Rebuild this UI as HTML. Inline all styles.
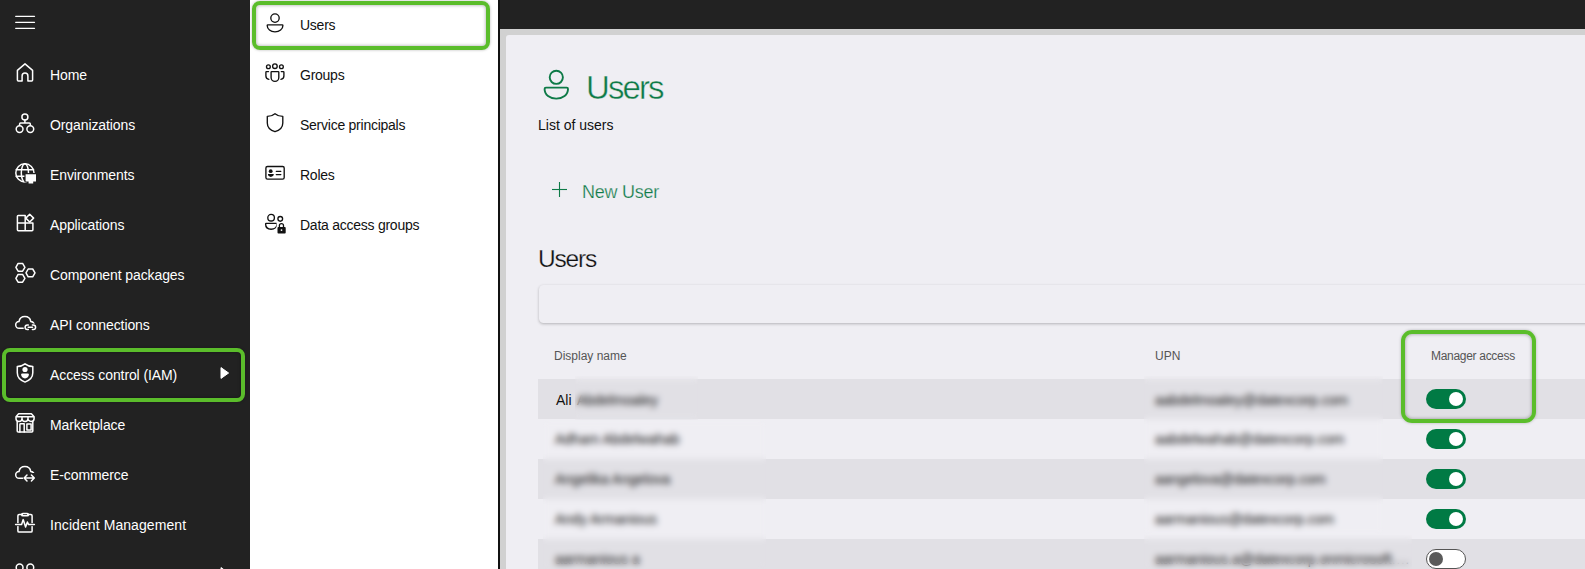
<!DOCTYPE html>
<html><head><meta charset="utf-8">
<style>
*{box-sizing:border-box;margin:0;padding:0}
html,body{width:1585px;height:569px;overflow:hidden;background:#222}
body{position:relative;font-family:"Liberation Sans",sans-serif}
.abs{position:absolute}
#sb{left:0;top:0;width:250px;height:569px;background:#222222}
.si{position:absolute;left:0;width:250px;height:50px}
.si svg{position:absolute;left:13px;top:11px;width:24px;height:24px}
.si span{position:absolute;left:50px;top:17px;font-size:14px;color:#fff;white-space:nowrap;line-height:16px;letter-spacing:-0.1px}
#pn{left:250px;top:0;width:248px;height:569px;background:#fff}
#pnb{left:498px;top:0;width:2px;height:569px;background:#111}
.pi{position:absolute;left:0;width:248px;height:50px}
.pi svg{position:absolute;left:13px;top:11px;width:24px;height:24px}
.pi span{position:absolute;left:50px;top:17px;font-size:14px;color:#111;white-space:nowrap;line-height:16px;letter-spacing:-0.25px}
#tb{left:500px;top:0;width:1085px;height:29px;background:#222222}
#fr{left:500px;top:29px;width:1085px;height:540px;background:#d1d1d1}
#ct{left:506px;top:35px;width:1079px;height:534px;background:#efeef3;border-top-left-radius:3px}
.hl{position:absolute;border:4px solid #5bbd2b;border-radius:8px;box-shadow:inset 0 0 3px 1px rgba(0,0,0,0.22),0 0 3px rgba(0,0,0,0.25)}
.row{position:absolute;left:538px;width:1047px;height:40px}
.dk{background:#e1e0e5}
.tx{color:#111;font-size:14px;line-height:16px;white-space:nowrap;position:absolute}
.bl{position:absolute;backdrop-filter:blur(3.2px);-webkit-backdrop-filter:blur(3.2px)}
.tg{position:absolute;left:1426px;width:40px;height:20px;border-radius:10px;background:#007a44}
.tg::after{content:"";position:absolute;left:23px;top:3px;width:14px;height:14px;border-radius:50%;background:#fff}
.tg.off{background:#fff;border:1px solid #555}
.tg.off::after{left:2px;top:2px;background:#5a5a5a}
</style></head><body>
<div id="sb" class="abs">
  <svg class="abs" style="left:15px;top:15px" width="21" height="15" viewBox="0 0 21 15"><g stroke="#fff" stroke-width="1.3" stroke-linecap="round"><line x1="0.7" y1="1.3" x2="19.5" y2="1.3"/><line x1="0.7" y1="7.3" x2="19.5" y2="7.3"/><line x1="0.7" y1="13.3" x2="19.5" y2="13.3"/></g></svg>
    <div class="si" style="top:50px"><svg viewBox="0 0 24 24"><path fill="none" stroke="#fff" stroke-width="1.5" stroke-linecap="round" stroke-linejoin="round" d="M12 2.9 L19.6 9.4 V18.9 a1 1 0 0 1 -1 1 H14.9 V15 a2.9 2.9 0 0 0 -5.8 0 V19.9 H5.4 a1 1 0 0 1 -1 -1 V9.4 Z"/></svg><span>Home</span></div>
  <div class="si" style="top:100px"><svg viewBox="0 0 24 24"><g fill="none" stroke="#fff" stroke-width="1.5" stroke-linecap="round" stroke-linejoin="round"><circle cx="11.9" cy="6" r="3"/><path d="M11.9 9 V11.9 M6.6 14.6 V12.9 a1 1 0 0 1 1 -1 H16.3 a1 1 0 0 1 1 1 V14.6"/><circle cx="6.6" cy="18.1" r="3.4"/><circle cx="17.3" cy="18.1" r="3.4"/></g></svg><span>Organizations</span></div>
  <div class="si" style="top:150px"><svg viewBox="0 0 24 24"><g fill="none" stroke="#fff" stroke-width="1.5" stroke-linecap="round" stroke-linejoin="round"><circle cx="11.9" cy="11.9" r="9.1"/><ellipse cx="11.9" cy="11.9" rx="3.6" ry="9.1"/><path d="M3.2 8.8 H20.6 M3.2 15.3 H20.6"/></g><path d="M11.4 12 h12.6 v9.6 h-3 v2.4 h-7 v-2.4 h-2.6z" fill="#222"/><path d="M12.6 13.2 h10.4 v7.2 h-2.8 v2.2 h-4.6 v-2.2 h-3z" fill="#fff"/></svg><span>Environments</span></div>
  <div class="si" style="top:200px"><svg viewBox="0 0 24 24"><g fill="none" stroke="#fff" stroke-width="1.5" stroke-linecap="round" stroke-linejoin="round"><path d="M12.2 4.4 H5.3 a0.9 0.9 0 0 0 -0.9 0.9 V18.8 a0.9 0.9 0 0 0 0.9 0.9 H19 a0.9 0.9 0 0 0 0.9 -0.9 V11.9 H12.2 Z M4.4 11.9 H12.2 V19.7"/><path d="M16.7 3.2 L20.6 7.1 L16.7 11 L12.8 7.1 Z"/></g></svg><span>Applications</span></div>
  <div class="si" style="top:250px"><svg viewBox="0 0 24 24"><g fill="none" stroke="#fff" stroke-width="1.5" stroke-linecap="round" stroke-linejoin="round"><path d="M2.9 6.3 L5.1 2.4 H9.6 L11.9 6.3 L9.6 10.2 H5.1 Z"/><path d="M2.9 17.3 L5.1 13.4 H9.6 L11.9 17.3 L9.6 21.2 H5.1 Z"/><path d="M13 11.9 L15.2 8 H19.7 L22 11.9 L19.7 15.8 H15.2 Z"/></g></svg><span>Component packages</span></div>
  <div class="si" style="top:300px"><svg viewBox="0 0 24 24"><path fill="none" stroke="#fff" stroke-width="1.5" stroke-linecap="round" stroke-linejoin="round" d="M11 17.3 H6.2 a3.4 3.4 0 0 1 -0.2 -6.8 a6 6 0 0 1 11.8 0 a3.6 3.6 0 0 1 3.3 2.9"/><path d="M10.5 16.2 a3.6 3.6 0 0 1 3.6 -3.6 h6 a3.6 3.6 0 0 1 0 7.2 h-6 a3.6 3.6 0 0 1 -3.6 -3.6z" fill="#222"/><g fill="none" stroke="#fff" stroke-width="1.5" stroke-linecap="round" stroke-linejoin="round"><path d="M15.3 13.9 H14.4 a2.3 2.3 0 0 0 0 4.6 H15.3 M19.4 13.9 H20.3 a2.3 2.3 0 0 1 0 4.6 H19.4 M15.2 16.2 H19.5"/></g></svg><span>API connections</span></div>
  <div class="si" style="top:350px"><svg viewBox="0 0 24 24"><path fill="none" stroke="#fff" stroke-width="1.5" stroke-linecap="round" stroke-linejoin="round" d="M12 2.8 C9.8 4.6 7.2 5.4 4.3 5.4 V11.8 C4.3 16.2 7 19.3 12 21.1 C17 19.3 19.8 16.2 19.8 11.8 V5.4 C16.8 5.4 14.2 4.6 12 2.8Z"/><circle cx="12" cy="8.5" r="2.6" fill="#fff"/><path d="M8.1 13.6 a1.2 1.2 0 0 1 1.2 -1.2 h5.4 a1.2 1.2 0 0 1 1.2 1.2 c0 2.2 -1.8 3.9 -3.9 3.9 s-3.9 -1.7 -3.9 -3.9z" fill="#fff"/></svg><span>Access control (IAM)</span></div>
  <div class="si" style="top:400px"><svg viewBox="0 0 24 24"><g fill="none" stroke="#fff" stroke-width="1.5" stroke-linecap="round" stroke-linejoin="round"><path d="M5.6 2.8 H18.4 L21.1 5.8 V7.4 a3 3 0 0 1 -6.1 0 a3 3 0 0 1 -6 0 a3 3 0 0 1 -6 0 V5.8 Z M3 5.8 H21 M9 5.8 V7.4 M15 5.8 V7.4"/><path d="M4.2 10.3 V20.1 a1 1 0 0 0 1 1 H18.8 a1 1 0 0 0 1 -1 V10.3"/><path d="M6.9 20.9 V13.4 a0.6 0.6 0 0 1 0.6 -0.6 H11.2 V20.9 M13.9 13 H18.1 V18.9 H13.9 Z"/></g></svg><span>Marketplace</span></div>
  <div class="si" style="top:450px"><svg viewBox="0 0 24 24"><path fill="none" stroke="#fff" stroke-width="1.5" stroke-linecap="round" stroke-linejoin="round" d="M9.6 17.3 H6.2 a3.4 3.4 0 0 1 -0.2 -6.8 a6 6 0 0 1 11.8 0 a3.6 3.6 0 0 1 3.3 3.3"/><path d="M9.4 12 H24 V22 H9.4z" fill="#222" transform="translate(0.8 0)"/><g fill="none" stroke="#fff" stroke-width="1.5" stroke-linecap="round" stroke-linejoin="round"><path d="M11.2 17 H21.2 M14 14 L11.1 17 L14 20 M18.4 14 L21.3 17 L18.4 20"/></g></svg><span>E-commerce</span></div>
  <div class="si" style="top:500px"><svg viewBox="0 0 24 24"><g fill="none" stroke="#fff" stroke-width="1.5" stroke-linecap="round" stroke-linejoin="round"><path d="M9.3 3.6 H6.1 a1.2 1.2 0 0 0 -1.2 1.2 V19.9 a1.2 1.2 0 0 0 1.2 1.2 H17.9 a1.2 1.2 0 0 0 1.2 -1.2 V4.8 a1.2 1.2 0 0 0 -1.2 -1.2 H14.8"/><path d="M9.8 2.6 H14.3 a0.9 0.9 0 0 1 0 2.2 H9.8 a0.9 0.9 0 0 1 0 -2.2z"/></g><path d="M2.5 13.6 H21.5" stroke="#222" stroke-width="3"/><path fill="none" stroke="#fff" stroke-width="1.5" stroke-linecap="round" stroke-linejoin="round" d="M2.6 13.6 H8.6 L10.2 8.6 L12.6 16 L14.4 11 L15.6 13.6 H21.4"/></svg><span style="letter-spacing:0.08px">Incident Management</span></div>
  <svg class="abs" style="left:219px;top:366px" width="11" height="14" viewBox="0 0 11 14"><path d="M2 1.6 L9.6 7 L2 12.4 Z" fill="#fff" stroke="#fff" stroke-width="1" stroke-linejoin="round"/></svg>
  <div class="si" style="top:550px"><svg viewBox="0 0 24 24"><g fill="none" stroke="#fff" stroke-width="1.5" stroke-linecap="round" stroke-linejoin="round"><circle cx="6.6" cy="6.5" r="3.4"/><circle cx="17.3" cy="6.5" r="3.4"/></g></svg></div>
  <svg class="abs" style="left:219px;top:566px" width="11" height="14" viewBox="0 0 11 14"><path d="M2 1.6 L9.6 7 L2 12.4 Z" fill="#fff" stroke="#fff" stroke-width="1" stroke-linejoin="round"/></svg>
  <div class="hl" style="left:2px;top:348px;width:243px;height:54px"></div>
</div>
<div id="pn" class="abs">
  <div class="abs" style="left:6px;top:5px;width:230px;height:41px;background:#fff;box-shadow:0 0 4px 1px rgba(0,0,0,0.28);border-radius:3px"></div>
  <div class="pi" style="top:0px"><svg viewBox="0 0 24 24"><g fill="none" stroke="#111" stroke-width="1.35" stroke-linecap="round" stroke-linejoin="round"><circle cx="12" cy="7.1" r="4.2"/><path d="M4.8 13.9 H19.3 a0.6 0.6 0 0 1 0.6 0.6 C19.9 18.2 16.4 20.9 12 20.9 C7.6 20.9 4.2 18.2 4.2 14.5 a0.6 0.6 0 0 1 0.6 -0.6Z"/></g></svg><span>Users</span></div>
  <div class="pi" style="top:50px"><svg viewBox="0 0 24 24"><g fill="none" stroke="#111" stroke-width="1.35" stroke-linecap="round" stroke-linejoin="round"><circle cx="5.4" cy="5.7" r="1.9"/><circle cx="11.9" cy="5.2" r="2.3"/><circle cx="18.4" cy="5.7" r="1.9"/><path d="M8.9 10.6 H15.2 a0.6 0.6 0 0 1 0.6 0.6 V16.5 a3.85 3.85 0 0 1 -7.7 0 V11.2 a0.6 0.6 0 0 1 0.6 -0.6Z"/><path d="M5.5 10.6 H3.5 a0.6 0.6 0 0 0 -0.6 0.6 V15 a3.3 3.3 0 0 0 3 3.3"/><path d="M18.3 10.6 H20.3 a0.6 0.6 0 0 1 0.6 0.6 V15 a3.3 3.3 0 0 1 -3 3.3"/></g></svg><span>Groups</span></div>
  <div class="pi" style="top:100px"><svg viewBox="0 0 24 24"><path fill="none" stroke="#111" stroke-width="1.35" stroke-linecap="round" stroke-linejoin="round" d="M12 2.7 C9.8 4.5 7.2 5.4 4.3 5.4 V12 C4.3 16.3 7 19.2 12 20.7 C17 19.2 19.8 16.3 19.8 12 V5.4 C16.8 5.4 14.2 4.5 12 2.7Z"/></svg><span>Service principals</span></div>
  <div class="pi" style="top:150px"><svg viewBox="0 0 24 24"><rect x="2.9" y="5.5" width="18.3" height="12.6" rx="1.6" fill="none" stroke="#111" stroke-width="1.35" stroke-linecap="round" stroke-linejoin="round"/><circle cx="7.7" cy="10.2" r="1.9" fill="#111"/><path d="M4.9 13.1 h5.9 c0 1.7 -1.3 2.8 -2.95 2.8 s-2.95 -1.1 -2.95 -2.8z" fill="#111"/><path d="M13.3 10.3 H17.8 M13.3 13.6 H17.8" stroke="#111" stroke-width="1.35" stroke-linecap="round"/></svg><span>Roles</span></div>
  <div class="pi" style="top:200px"><svg viewBox="0 0 24 24"><g fill="none" stroke="#111" stroke-width="1.35" stroke-linecap="round" stroke-linejoin="round"><circle cx="8.1" cy="6.7" r="3.3"/><circle cx="17.25" cy="7.85" r="2.35"/><path d="M3.2 12.4 H13.4 a0.6 0.6 0 0 1 0.6 0.6 C14 16.1 11.4 18.2 8.1 18.2 C4.8 18.2 2.6 16.1 2.6 13 a0.6 0.6 0 0 1 0.6 -0.6Z"/></g><path d="M13.6 11 h10 v12 h-10z" fill="#fff"/><path d="M16.4 16.3 V14.6 a2.05 2.05 0 0 1 4.1 0 V16.3" fill="none" stroke="#111" stroke-width="1.3"/><rect x="14.5" y="16" width="8.2" height="6.4" rx="0.9" fill="#111"/><circle cx="18.5" cy="19.1" r="0.9" fill="#fff"/></svg><span>Data access groups</span></div>
</div>
<div class="hl" style="left:252px;top:1px;width:238px;height:49px"></div>
<div id="pnb" class="abs"></div>
<div id="tb" class="abs"></div>
<div id="fr" class="abs"></div>
<div id="ct" class="abs"></div>
<svg class="abs" style="left:541px;top:69px" width="30" height="32" viewBox="0 0 30 32"><g fill="none" stroke="#0e7a47" stroke-width="1.9" stroke-linejoin="round"><circle cx="15.3" cy="8.3" r="6.6"/><path d="M4.9 18.6 H25.7 a1.3 1.3 0 0 1 1.3 1.3 C27 25.9 21.8 29.6 15.3 29.6 C8.8 29.6 3.6 25.9 3.6 19.9 a1.3 1.3 0 0 1 1.3 -1.3Z"/></g></svg>
<div class="abs" style="left:586px;top:69px;font-size:33px;line-height:38px;color:#0e7a47;letter-spacing:-1.9px;-webkit-text-stroke:0.45px #efeef3">Users</div>
<div class="abs" style="left:538px;top:117px;font-size:14px;line-height:16px;color:#111">List of users</div>
<svg class="abs" style="left:551px;top:181px" width="17" height="17" viewBox="0 0 17 17"><g stroke="#0e7a47" stroke-width="1.1"><line x1="8.5" y1="1" x2="8.5" y2="16"/><line x1="1" y1="8.5" x2="16" y2="8.5"/></g></svg>
<div class="abs" style="left:582px;top:182px;font-size:18px;line-height:20px;color:#0e7a47;letter-spacing:-0.25px;-webkit-text-stroke:0.25px #efeef3">New User</div>
<div class="abs" style="left:538px;top:246px;font-size:24.5px;line-height:26px;color:#111;letter-spacing:-1.2px;-webkit-text-stroke:0.25px #efeef3">Users</div>
<div class="abs" style="left:539px;top:285px;width:1060px;height:38px;border-radius:4.5px;background:#efeef3;box-shadow:0 1px 3px rgba(0,0,0,0.25)"></div>
<div class="abs" style="left:554px;top:349px;font-size:12px;line-height:14px;color:#555">Display name</div>
<div class="abs" style="left:1155px;top:349px;font-size:12px;line-height:14px;color:#555">UPN</div>
<div class="abs" style="left:1431px;top:349px;font-size:12px;line-height:14px;color:#555;letter-spacing:-0.3px">Manager access</div>
<div class="row dk" style="top:379px"></div>
<div class="row" style="top:419px"></div>
<div class="row dk" style="top:459px"></div>
<div class="row" style="top:499px"></div>
<div class="row dk" style="top:539px"></div>
<div class="abs" style="left:556px;top:392px;font-size:14px;line-height:16px;color:#111">Ali</div>
<div class="tx" style="left:577px;top:392px">Abdelmoaley</div>
<div class="tx" style="left:555px;top:431px">Adham Abdelwahab</div>
<div class="tx" style="left:555px;top:471px">Angelika Angelova</div>
<div class="tx" style="left:555px;top:511px">Andy Armanious</div>
<div class="tx" style="left:555px;top:551px">aarmanious a</div>
<div class="tx" style="left:1155px;top:392px">aabdelmoaley@datexcorp.com</div>
<div class="tx" style="left:1155px;top:431px">aabdelwahab@datexcorp.com</div>
<div class="tx" style="left:1155px;top:471px">aangelova@datexcorp.com</div>
<div class="tx" style="left:1155px;top:511px">aarmanious@datexcorp.com</div>
<div class="tx" style="left:1155px;top:551px;width:261px;overflow:hidden;text-overflow:ellipsis">aarmanious.a@datexcorp.onmicrosoft.com</div>
<div class="bl" style="left:575px;top:376px;width:123px;height:44px"></div>
<div class="bl" style="left:543px;top:420px;width:223px;height:149px"></div>
<div class="bl" style="left:1144px;top:376px;width:239px;height:159px"></div>
<div class="bl" style="left:1144px;top:535px;width:268px;height:34px"></div>
<div class="tg" style="top:389px"></div>
<div class="tg" style="top:429px"></div>
<div class="tg" style="top:469px"></div>
<div class="tg" style="top:509px"></div>
<div class="tg off" style="top:549px"></div>
<div class="hl" style="left:1401px;top:330px;width:135px;height:93px;border-radius:11px"></div>
</body></html>
